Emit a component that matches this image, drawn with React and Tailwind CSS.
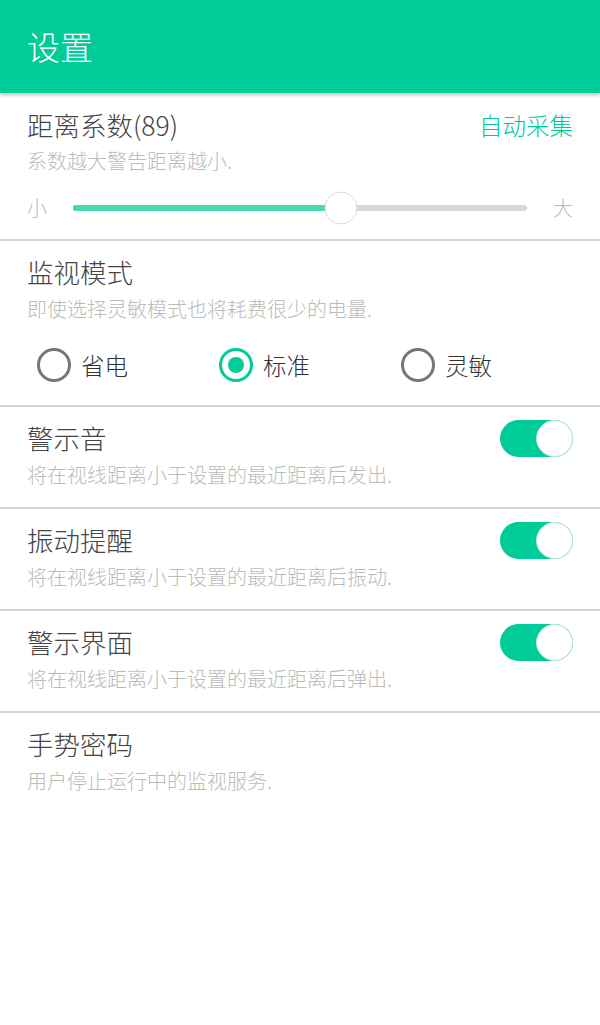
import { useState } from "react";

const FONT = "font-['Noto_Sans_CJK_SC','Noto_Sans',sans-serif]";

function Divider() {
  return <div className="h-[2px] bg-[#d4d4d4]" />;
}

function Toggle({ on }) {
  return (
    <div
      className={`flex h-[37px] w-[73px] items-center rounded-full ${
        on ? "justify-end bg-[#00cc99]" : "justify-start bg-[#d6d6d6]"
      }`}
    >
      <div className="h-[37px] w-[37px] rounded-full border border-[#bfe8dc] bg-white" />
    </div>
  );
}

function Radio({ label, checked, onClick }) {
  return (
    <button onClick={onClick} className="flex w-[182px] items-center gap-[10px]">
      <span
        className={`flex h-[34px] w-[34px] items-center justify-center rounded-full border-[3px] ${
          checked ? "border-[#00cc99]" : "border-[#767676]"
        }`}
      >
        {checked && <span className="h-[16px] w-[16px] rounded-full bg-[#00cc99]" />}
      </span>
      <span className="text-[23.5px] font-light leading-[34px] text-[#333]">{label}</span>
    </button>
  );
}

function ToggleRow({ title, desc }) {
  return (
    <div className="px-[27px] pt-[14px] pb-[19px]">
      <div className="flex h-[34px] items-center justify-between">
        <span className="text-[26.5px] font-light leading-[34px] text-[#444]">{title}</span>
        <Toggle on />
      </div>
      <div className="mt-[7px] text-[20px] font-light leading-[26px] text-[#bbbbbb]">{desc}</div>
    </div>
  );
}

export default function App() {
  const [mode, setMode] = useState(1);
  const modes = ["省电", "标准", "灵敏"];

  return (
    <div className={`min-h-[1025px] bg-white ${FONT}`}>
      {/* Toolbar */}
      <header className="relative z-10 flex h-[93px] items-center bg-[#00cc99] px-[27px] shadow-[0_2px_4px_rgba(0,0,0,0.25)]">
        <h1 className="text-[33px] font-light leading-none text-white">设置</h1>
      </header>

      {/* 距离系数 */}
      <section className="px-[27px] pt-[15px] pb-[14px]">
        <div className="flex h-[34px] items-center justify-between">
          <span className="text-[26.5px] font-light leading-[34px] text-[#444]">距离系数(89)</span>
          <span className="text-[23.5px] font-light leading-[34px] text-[#00c896]">自动采集</span>
        </div>
        <div className="mt-[6px] text-[20px] font-light leading-[26px] text-[#bbbbbb]">系数越大警告距离越小.</div>
        <div className="mt-[17px] flex h-[34px] items-center gap-[26px]">
          <span className="w-[20px] text-[20px] font-light leading-none text-[#bbbbbb]">小</span>
          <div className="relative h-[6px] flex-1 rounded-full bg-[#d6d6d6]">
            <div className="h-full w-[59%] rounded-l-full bg-[#48d8b2]" />
            <div className="absolute left-[59%] top-1/2 h-[33px] w-[33px] -translate-x-1/2 -translate-y-1/2 rounded-full border border-[#d8d8d8] bg-white" />
          </div>
          <span className="w-[20px] text-[20px] font-light leading-none text-[#bbbbbb]">大</span>
        </div>
      </section>
      <Divider />

      {/* 监视模式 */}
      <section className="pt-[14px] pb-[23px]">
        <div className="px-[27px]">
          <div className="text-[26.5px] font-light leading-[34px] text-[#444]">监视模式</div>
          <div className="mt-[7px] text-[20px] font-light leading-[26px] text-[#bbbbbb]">即使选择灵敏模式也将耗费很少的电量.</div>
        </div>
        <div className="mt-[26px] flex pl-[37px]">
          {modes.map((m, i) => (
            <Radio key={m} label={m} checked={mode === i} onClick={() => setMode(i)} />
          ))}
        </div>
      </section>
      <Divider />

      <ToggleRow title="警示音" desc="将在视线距离小于设置的最近距离后发出." />
      <Divider />
      <ToggleRow title="振动提醒" desc="将在视线距离小于设置的最近距离后振动." />
      <Divider />
      <ToggleRow title="警示界面" desc="将在视线距离小于设置的最近距离后弹出." />
      <Divider />

      <div className="px-[27px] pt-[14px] pb-[19px]">
        <div className="text-[26.5px] font-light leading-[34px] text-[#444]">手势密码</div>
        <div className="mt-[7px] text-[20px] font-light leading-[26px] text-[#bbbbbb]">用户停止运行中的监视服务.</div>
      </div>
    </div>
  );
}
